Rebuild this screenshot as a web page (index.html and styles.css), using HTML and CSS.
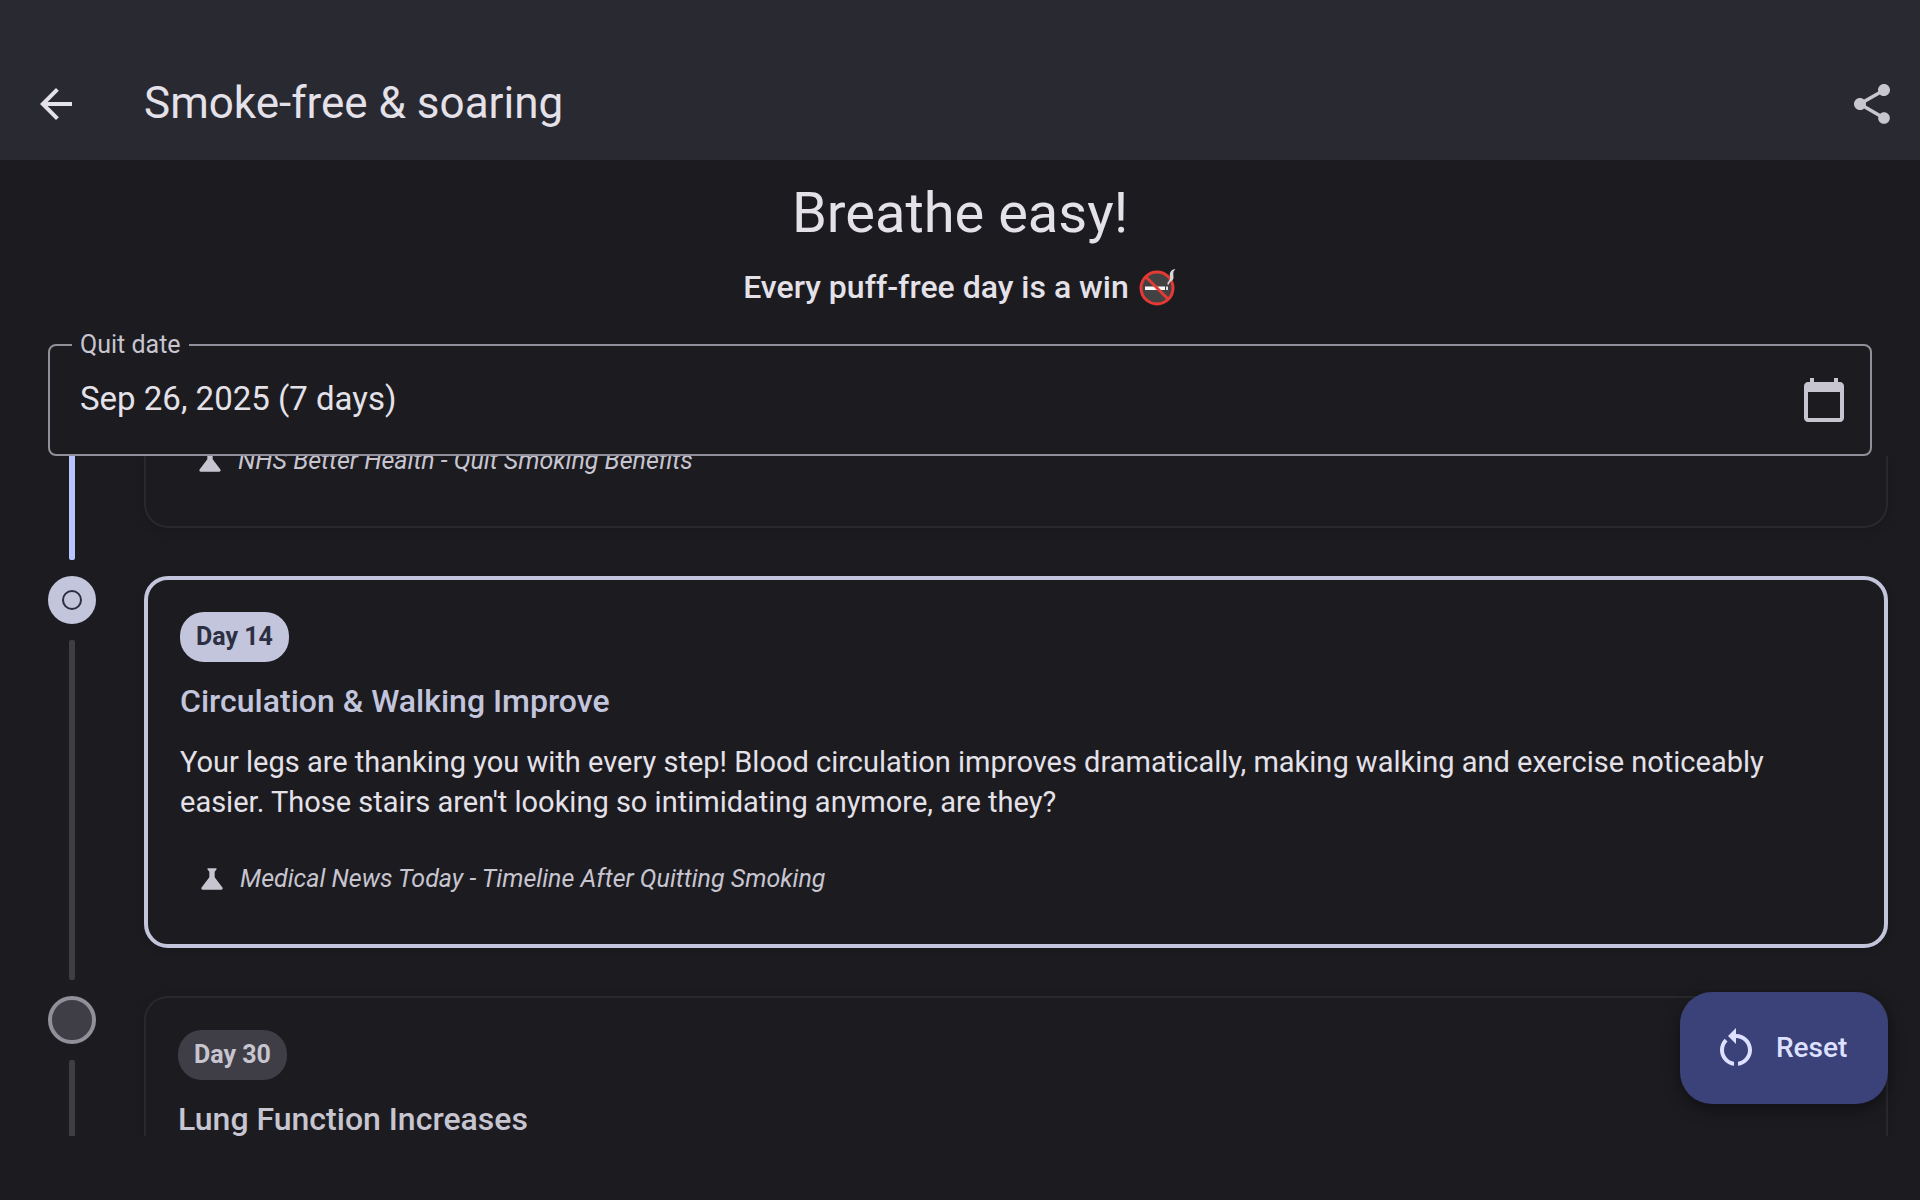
FILE: index.html
```html
<!DOCTYPE html>
<html lang="en">
<head>
<meta charset="utf-8">
<meta name="viewport" content="width=device-width, initial-scale=1">
<title>Smoke-free &amp; soaring</title>
<link rel="stylesheet" href="styles.css">
</head>
<body>
<header class="app-bar">
  <button class="icon-button" type="button" aria-label="Back">
    <svg class="icon" viewBox="0 0 24 24"><path d="M20 11H7.83l5.59-5.59L12 4l-8 8 8 8 1.41-1.41L7.83 13H20v-2z"/></svg>
  </button>
  <h1 class="app-title">Smoke-free &amp; soaring</h1>
  <button class="icon-button icon-button-muted" type="button" aria-label="Share">
    <svg class="icon" viewBox="0 0 24 24"><path d="M18 16.08c-.76 0-1.44.3-1.96.77L8.91 12.7c.05-.23.09-.46.09-.7s-.04-.47-.09-.7l7.05-4.11c.54.5 1.25.81 2.04.81 1.66 0 3-1.34 3-3s-1.34-3-3-3-3 1.34-3 3c0 .24.04.47.09.7L8.04 9.81C7.5 9.31 6.79 9 6 9c-1.66 0-3 1.34-3 3s1.34 3 3 3c.79 0 1.5-.31 2.04-.81l7.12 4.16c-.05.21-.08.43-.08.65 0 1.61 1.31 2.92 2.92 2.92s2.92-1.31 2.92-2.92-1.31-2.92-2.92-2.92z"/></svg>
  </button>
</header>
<main class="content">
  <section class="intro">
    <h2 class="headline">Breathe easy!</h2>
    <p class="tagline"><span>Every puff-free day is a win</span>
      <svg class="no-smoking" viewBox="0 0 38 38" role="img" aria-label="No smoking">
        <circle cx="18" cy="20" r="16" fill="#424242" stroke="#e53935" stroke-width="3"/>
        <path d="M6 18.500h20v3.500H6z" fill="#fafafa"/>
        <path d="M27 18.500h2v3.500h-2z" fill="#e0e0e0"/>
        <path d="M28.500 16.500c-.8-3 3.500-4 2.500-8-.7-4 1-7 5.500-7.500-3 2.500-2 5-2 8.500 0 4-4.500 3.500-4.500 7z" fill="#d6d6d6"/>
        <path d="M7 9l22 22" stroke="#e53935" stroke-width="3"/>
      </svg>
    </p>
  </section>
  <div class="date-field">
    <label class="date-label" for="quit-date">Quit date</label>
    <input class="date-input" id="quit-date" type="text" value="Sep 26, 2025 (7 days)" readonly>
    <button class="icon-button icon-button-muted" type="button" aria-label="Pick a date">
      <svg class="icon" viewBox="0 0 24 24"><path d="M20 3h-1V1h-2v2H7V1H5v2H4c-1.100 0-2 .9-2 2v16c0 1.100.9 2 2 2h16c1.100 0 2-.9 2-2V5c0-1.100-.9-2-2-2zm0 18H4V8h16v13z"/></svg>
    </button>
  </div>
  <ol class="timeline">
    <li class="milestone milestone-passed">
      <div class="rail"><span class="line line-done"></span></div>
      <article class="card card-clipped">
        <p class="source">
          <svg class="flask" viewBox="0 0 24 24"><path d="M19.800 18.400 14 10.670V6.500l1.350-1.690c.26-.33.03-.81-.39-.81H9.040c-.42 0-.65.48-.39.81L10 6.500v4.170L4.200 18.400c-.49.66-.02 1.600.8 1.600h14c.82 0 1.290-.94.8-1.600z"/></svg>
          <cite>NHS Better Health - Quit Smoking Benefits</cite>
        </p>
      </article>
    </li>
    <li class="milestone">
      <div class="rail">
        <span class="dot dot-current"><svg class="dot-ring" viewBox="0 0 24 24"><circle cx="12" cy="12" r="9"/></svg></span>
        <span class="line"></span>
      </div>
      <article class="card card-current">
        <span class="badge">Day 14</span>
        <h3 class="card-title">Circulation &amp; Walking Improve</h3>
        <p class="card-text">Your legs are thanking you with every step! Blood circulation improves dramatically, making walking and exercise noticeably easier. Those stairs aren't looking so intimidating anymore, are they?</p>
        <p class="source">
          <svg class="flask" viewBox="0 0 24 24"><path d="M19.800 18.400 14 10.670V6.500l1.350-1.690c.26-.33.03-.81-.39-.81H9.040c-.42 0-.65.48-.39.81L10 6.500v4.170L4.200 18.400c-.49.66-.02 1.600.8 1.600h14c.82 0 1.290-.94.8-1.600z"/></svg>
          <cite>Medical News Today - Timeline After Quitting Smoking</cite>
        </p>
      </article>
    </li>
    <li class="milestone">
      <div class="rail">
        <span class="dot"></span>
        <span class="line"></span>
      </div>
      <article class="card card-open">
        <span class="badge">Day 30</span>
        <h3 class="card-title">Lung Function Increases</h3>
      </article>
    </li>
  </ol>
</main>
<button class="fab" type="button">
  <svg class="icon" viewBox="0 0 24 24"><path d="M12 5V2L8 6l4 4V7c3.310 0 6 2.690 6 6 0 2.970-2.170 5.430-5 5.910v2.020c3.950-.49 7-3.850 7-7.930 0-4.420-3.580-8-8-8zm-6 8c0-1.650.67-3.150 1.760-4.240L6.340 7.340C4.900 8.790 4 10.790 4 13c0 4.080 3.050 7.440 7 7.930v-2.020c-2.830-.48-5-2.940-5-5.910z"/></svg>
  <span>Reset</span>
</button>
</body>
</html>
```

FILE: styles.css
```css
:root {
  --surface: #1c1b20;
  --bar: #292932;
  --text: #e4e1e9;
  --muted: #c7c5d0;
  --outline: #90909a;
  --primary: #bac3ff;
  --secondary: #c3c5dd;
  --track: #3f3f43;
  --chip: #3f3e47;
}

* {
  box-sizing: border-box;
  margin: 0;
}

body {
  display: flex;
  flex-direction: column;
  height: 100vh;
  padding-bottom: 64px;
  overflow: hidden;
  background: var(--surface);
  color: var(--text);
  font-family: Roboto, "Liberation Sans", sans-serif;
}

button,
input {
  border: 0;
  padding: 0;
  background: none;
  color: inherit;
  font: inherit;
}

.icon {
  display: block;
  width: 48px;
  height: 48px;
  fill: currentColor;
}

.icon-button-muted {
  color: var(--muted);
}

.app-bar {
  display: flex;
  align-items: center;
  gap: 64px;
  height: 160px;
  padding: 48px 24px 0 32px;
  background: var(--bar);
}

.app-title {
  flex: 1;
  padding-bottom: 2px;
  font-size: 44px;
  font-weight: 400;
  line-height: 64px;
}

.content {
  display: flex;
  flex: 1;
  flex-direction: column;
  min-height: 0;
}

.intro {
  display: flex;
  flex-direction: column;
  gap: 16px;
  padding: 16px 48px 36px;
  text-align: center;
}

.headline {
  font-size: 56px;
  font-weight: 400;
  line-height: 74px;
}

.tagline {
  display: flex;
  align-items: center;
  justify-content: center;
  gap: 10px;
  font-size: 32px;
  font-weight: 500;
  line-height: 42px;
}

.no-smoking {
  width: 38px;
  height: 38px;
  fill: none;
}

.date-field {
  position: relative;
  display: flex;
  align-items: center;
  height: 112px;
  margin: 0 48px;
  padding: 0 22px 0 30px;
  border: 2px solid var(--outline);
  border-radius: 8px;
}

.date-label {
  position: absolute;
  top: -17px;
  left: 22px;
  padding: 0 8px;
  background: var(--surface);
  color: var(--muted);
  font-size: 25px;
  line-height: 32px;
}

.date-input {
  flex: 1;
  min-width: 0;
  padding-bottom: 2px;
  font-size: 33px;
  line-height: 48px;
  outline: none;
}

.timeline {
  flex: 1;
  min-height: 0;
  padding: 0 32px 0 48px;
  overflow: hidden;
  list-style: none;
}

.milestone {
  display: flex;
  gap: 48px;
}

.milestone-passed {
  height: 120px;
}

.rail {
  display: flex;
  flex-direction: column;
  align-items: center;
  gap: 16px;
  width: 48px;
  padding-bottom: 16px;
}

.line {
  flex: 1;
  width: 6px;
  border-radius: 2px;
  background: var(--track);
}

.line-done {
  border-radius: 0 0 2px 2px;
  background: var(--primary);
}

.dot {
  display: flex;
  align-items: center;
  justify-content: center;
  width: 48px;
  height: 48px;
  border: 4px solid var(--outline);
  border-radius: 50%;
  background: var(--chip);
}

.dot-current {
  border-color: var(--secondary);
  background: var(--secondary);
}

.dot-ring {
  width: 24px;
  height: 24px;
  fill: none;
  stroke: #2c2f42;
  stroke-width: 2;
}

.card {
  display: flex;
  flex: 1;
  flex-direction: column;
  align-items: flex-start;
  margin-bottom: 48px;
  padding: 32px;
  border: 2px solid #29282d;
  border-radius: 24px;
  box-shadow: 0 2px 8px rgba(0, 0, 0, 0.15);
}

.card-clipped {
  justify-content: flex-end;
  border-top: 0;
  border-radius: 0 0 24px 24px;
}

.card-open {
  min-height: 372px;
}

.card-current {
  border: 4px solid var(--secondary);
}

.badge {
  margin-bottom: 16px;
  padding: 9px 16px;
  border-radius: 24px;
  background: var(--chip);
  color: var(--muted);
  font-size: 25px;
  font-weight: 700;
  line-height: 32px;
}

.card-current .badge {
  background: var(--secondary);
  color: #2c2f42;
}

.card-title {
  margin-bottom: 18px;
  color: var(--muted);
  font-size: 32px;
  font-weight: 500;
  line-height: 46px;
}

.card-current .card-title {
  color: var(--secondary);
}

.card-text {
  margin-bottom: 24px;
  padding-right: 16px;
  font-size: 29px;
  line-height: 40px;
}

.source {
  display: flex;
  align-items: center;
  gap: 12px;
  padding: 16px;
  color: var(--muted);
  font-size: 25px;
  line-height: 34px;
}

.flask {
  width: 32px;
  height: 32px;
  fill: currentColor;
}

.fab {
  position: absolute;
  right: 32px;
  bottom: 96px;
  display: flex;
  align-items: center;
  gap: 16px;
  min-width: 208px;
  height: 112px;
  padding: 0 32px;
  border-radius: 32px;
  background: #3a4279;
  box-shadow: 0 6px 16px rgba(0, 0, 0, 0.4);
  color: #dee0ff;
  font-size: 28px;
  font-weight: 500;
  line-height: 40px;
}
```
